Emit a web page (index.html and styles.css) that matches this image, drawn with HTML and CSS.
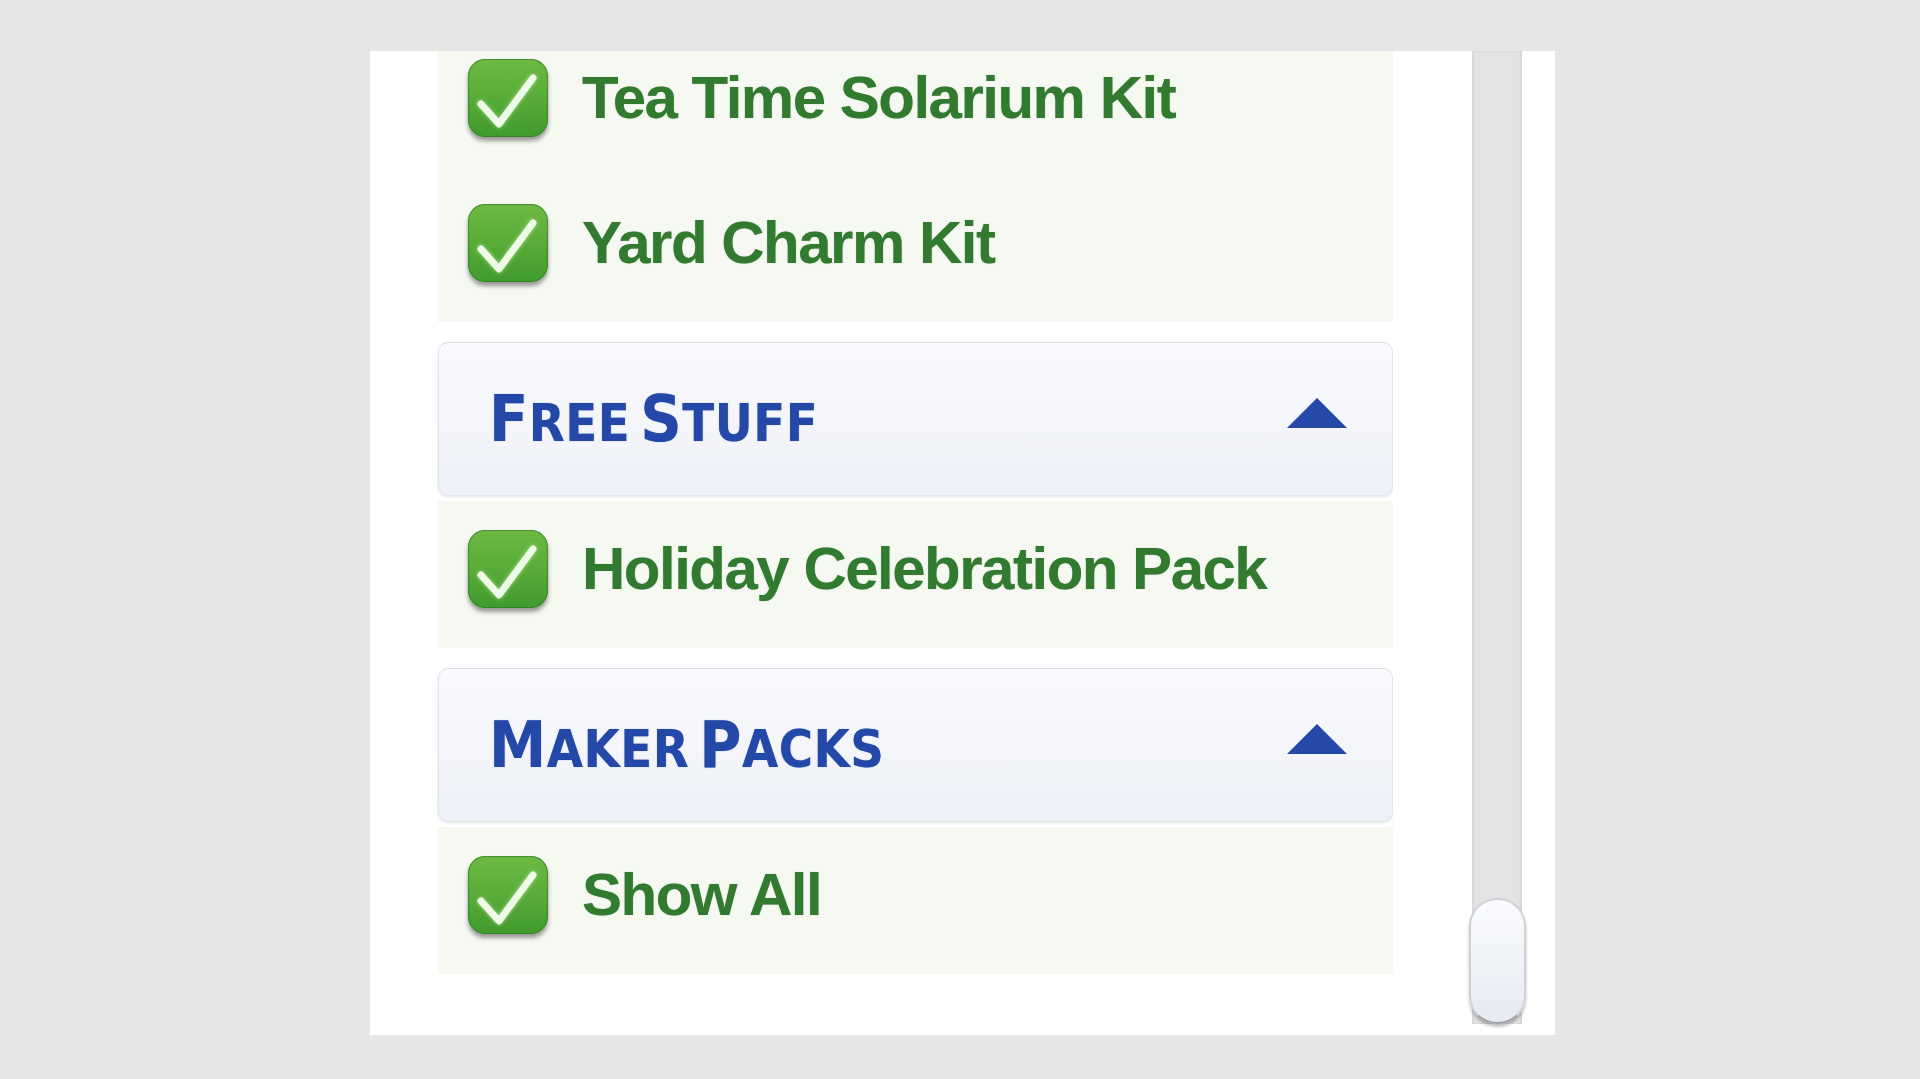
FILE: index.html
```html
<!DOCTYPE html>
<html lang="en">
<head>
<meta charset="utf-8">
<title>Pack Filter</title>
<link rel="stylesheet" href="styles.css">
</head>
<body>
<div class="panel">
  <div class="viewport">
    <div class="list">
      <div class="section-body">
        <div class="item">
          <span class="check"><svg viewBox="0 0 80 78" width="80" height="78"><polyline points="13,45 31,65 65,19" /></svg></span>
          <span class="label">Tea Time Solarium Kit</span>
        </div>
        <div class="item">
          <span class="check"><svg viewBox="0 0 80 78" width="80" height="78"><polyline points="13,45 31,65 65,19" /></svg></span>
          <span class="label">Yard Charm Kit</span>
        </div>
      </div>

      <div class="section-head">
        <h2 class="title"><span class="cap">F</span><span class="sc">ree</span> <span class="cap">S</span><span class="sc">tuff</span></h2>
        <span class="tri"></span>
      </div>
      <div class="section-body">
        <div class="item">
          <span class="check"><svg viewBox="0 0 80 78" width="80" height="78"><polyline points="13,45 31,65 65,19" /></svg></span>
          <span class="label">Holiday Celebration Pack</span>
        </div>
      </div>

      <div class="section-head">
        <h2 class="title"><span class="cap">M</span><span class="sc">aker</span> <span class="cap">P</span><span class="sc">acks</span></h2>
        <span class="tri"></span>
      </div>
      <div class="section-body">
        <div class="item">
          <span class="check"><svg viewBox="0 0 80 78" width="80" height="78"><polyline points="13,45 31,65 65,19" /></svg></span>
          <span class="label">Show All</span>
        </div>
      </div>
    </div>
  </div>
  <div class="scrollbar">
    <div class="thumb"></div>
  </div>
</div>
</body>
</html>
```

FILE: styles.css
```css
html, body {
  margin: 0;
  padding: 0;
}

body {
  background: #e6e6e6;
  width: 1920px;
  height: 1079px;
  overflow: hidden;
  font-family: "Liberation Sans", Arial, sans-serif;
}

.panel {
  display: flex;
  margin: 51px 0 0 370px;
  width: 1185px;
  height: 984px;
  background: #ffffff;
}

.viewport {
  width: 1023px;
  padding-left: 68px;
  box-sizing: border-box;
  overflow: hidden;
}

.list {
  width: 955px;
  margin-top: -21px;
  display: flex;
  flex-direction: column;
}

.section-body {
  background: #f6f8f2;
  display: flex;
  flex-direction: column;
  gap: 10px;
  padding: 0 0 12px 30px;
}

.item {
  height: 135px;
  display: flex;
  align-items: center;
  gap: 34px;
}

.check {
  width: 80px;
  height: 78px;
  flex: none;
  border-radius: 17px;
  background: linear-gradient(#6db944, #56aa37 55%, #409a2d);
  box-shadow: inset 0 0 0 1px rgba(40, 110, 30, 0.55), 0 4px 4px rgba(0, 0, 0, 0.38);
  display: flex;
}

.check svg {
  display: block;
}

.check polyline {
  fill: none;
  stroke: #eefbe6;
  stroke-width: 7;
  stroke-linecap: round;
  stroke-linejoin: round;
  filter: drop-shadow(0 0 2px rgba(220, 255, 200, 0.6));
}

.label {
  font-size: 60px;
  font-weight: bold;
  letter-spacing: -1.5px;
  color: #317a30;
  white-space: nowrap;
  text-shadow: 0 0 1px rgba(49, 122, 48, 0.5);
}

.section-head {
  margin: 20px 0 5px 0;
  height: 154px;
  box-sizing: border-box;
  border-radius: 10px;
  border: 1px solid #e1e5ec;
  border-top-color: #d9dce2;
  background: linear-gradient(#f9fafd, #f3f5fa 60%, #eef1f8);
  box-shadow: 0 1px 3px rgba(0, 0, 0, 0.12);
  display: flex;
  align-items: center;
  justify-content: space-between;
  padding: 0 45px 0 50px;
}

.title {
  margin: 0;
  font-family: "DejaVu Sans Condensed", "Liberation Sans", sans-serif;
  font-weight: bold;
  color: #2448a7;
  white-space: nowrap;
  line-height: 1;
  letter-spacing: 0.5px;
  word-spacing: 2px;
  text-shadow: 0 0 1px rgba(36, 72, 167, 0.6);
}

.cap {
  font-size: 64px;
}

.sc {
  font-size: 52px;
  text-transform: uppercase;
}

.tri {
  width: 0;
  height: 0;
  border-left: 30px solid transparent;
  border-right: 30px solid transparent;
  border-bottom: 30px solid #2549a8;
  margin-top: -12px;
}

.scrollbar {
  width: 50px;
  margin: 0 0 11px 79px;
  background: #e3e3e3;
  box-shadow: inset 2px 0 2px rgba(0, 0, 0, 0.05), inset -2px 0 2px rgba(0, 0, 0, 0.06);
  display: flex;
  flex-direction: column;
  justify-content: flex-end;
  align-items: center;
}

.thumb {
  width: 57px;
  height: 126px;
  flex: none;
  box-sizing: border-box;
  border-radius: 28px;
  border: 2px solid #cfd2d6;
  border-bottom-color: #9ea1a5;
  background: linear-gradient(#fbfcfe, #eef1f6 60%, #e6eaf1);
  box-shadow: 0 3px 3px rgba(0, 0, 0, 0.25);
}
```
